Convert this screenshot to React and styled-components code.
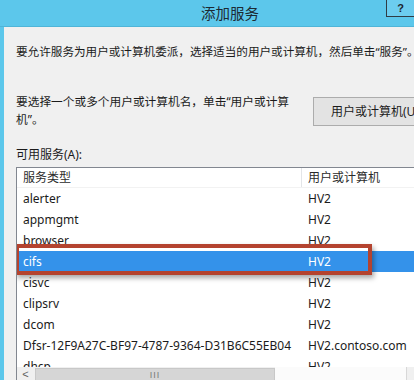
import React from 'react';
import styled, { createGlobalStyle } from 'styled-components';

const services = [
  { name: 'alerter', host: 'HV2' },
  { name: 'appmgmt', host: 'HV2' },
  { name: 'browser', host: 'HV2' },
  { name: 'cifs', host: 'HV2', selected: true },
  { name: 'cisvc', host: 'HV2' },
  { name: 'clipsrv', host: 'HV2' },
  { name: 'dcom', host: 'HV2' },
  { name: 'Dfsr-12F9A27C-BF97-4787-9364-D31B6C55EB04', host: 'HV2.contoso.com' },
  { name: 'dhcp', host: 'HV2' },
];

export default function App() {
  return (
    <>
      <GlobalStyle />
      <Window>
        <TitleBar>
          <Title>添加服务</Title>
          <HelpButton>?</HelpButton>
        </TitleBar>
        <Body>
          <Intro>要允许服务为用户或计算机委派，选择适当的用户或计算机，然后单击“服务”。</Intro>
          <PickRow>
            <PickText>要选择一个或多个用户或计算机名，单击“用户或计算机”。</PickText>
            <PickButton>用户或计算机(U)...</PickButton>
          </PickRow>
          <Label>可用服务(A):</Label>
          <ListBox>
            <HeaderRow>
              <HeadCell $first>服务类型</HeadCell>
              <HeadCell>用户或计算机</HeadCell>
            </HeaderRow>
            <Rows>
              {services.map((s) => (
                <Row key={s.name} $selected={s.selected}>
                  <Cell $first>{s.name}</Cell>
                  <Cell>{s.host}</Cell>
                  {s.selected && <Highlight />}
                </Row>
              ))}
            </Rows>
            <HScroll>
              <ArrowBtn>&lt;</ArrowBtn>
              <Thumb>III</Thumb>
              <Track />
            </HScroll>
          </ListBox>
        </Body>
      </Window>
    </>
  );
}

const GlobalStyle = createGlobalStyle`
  *, *::before, *::after {
    box-sizing: border-box;
  }
  html, body {
    margin: 0;
    padding: 0;
    overflow: hidden;
  }
  body {
    font-family: "Noto Sans", "Noto Sans CJK SC", sans-serif;
    font-size: 12px;
    color: #1b1b1b;
  }
`;

const Window = styled.div`
  width: 414px;
  height: 380px;
  overflow: hidden;
  background: #5cc7eb;
  display: flex;
  flex-direction: column;
`;

const TitleBar = styled.div`
  height: 27px;
  flex-shrink: 0;
  display: flex;
  align-items: flex-start;
  border-bottom: 1px solid #4fb5d8;
`;

const Title = styled.div`
  margin-left: 201px;
  line-height: 26px;
  font-size: 14.5px;
  color: #1c2a33;
`;

const HelpButton = styled.div`
  margin-left: auto;
  width: 28px;
  height: 17px;
  border: 1px solid #2f3c44;
  border-top: none;
  border-right: none;
  background: #6ccdef;
  color: #1c2430;
  font-family: "Liberation Sans", sans-serif;
  font-weight: bold;
  font-size: 11px;
  line-height: 16px;
  text-align: center;
`;

const Body = styled.div`
  flex: 1;
  margin-left: 4px;
  background: #f0f0f0;
  padding: 16px 0 0 12px;
  display: flex;
  flex-direction: column;
  overflow: hidden;
  min-height: 0;
`;

const Intro = styled.div`
  line-height: 18px;
  font-size: 11.6px;
  white-space: nowrap;
`;

const PickRow = styled.div`
  margin-top: 31px;
  display: flex;
  align-items: flex-start;
  gap: 15px;
`;

const PickText = styled.div`
  width: 282px;
  flex-shrink: 0;
  font-size: 11.7px;
  line-height: 18px;
`;

const PickButton = styled.div`
  flex-shrink: 0;
  margin-top: 5px;
  height: 29px;
  padding: 0 17px;
  border: 1px solid #acacac;
  background: #e3e3e3;
  line-height: 27px;
  white-space: nowrap;
`;

const Label = styled.div`
  margin-top: 18px;
  line-height: 18px;
`;

const ListBox = styled.div`
  margin-top: 3px;
  width: 420px;
  height: 218px;
  flex-shrink: 0;
  border: 1px solid #828790;
  background: #fff;
  display: flex;
  flex-direction: column;
`;

const HeaderRow = styled.div`
  height: 20px;
  flex-shrink: 0;
  display: flex;
  border-bottom: 1px solid #f2f2f2;
`;

const HeadCell = styled.div`
  width: ${(p) => (p.$first ? '285px' : 'auto')};
  padding-left: 6px;
  line-height: 19px;
  color: #2b2b2b;
  border-right: ${(p) => (p.$first ? '1px solid #e3e5e8' : 'none')};
`;

const Rows = styled.div`
  height: 179px;
  overflow: hidden;
  flex-shrink: 0;
`;

const Row = styled.div`
  position: relative;
  height: 21px;
  display: flex;
  align-items: center;
  background: ${(p) => (p.$selected ? '#3492ea' : 'transparent')};
  color: ${(p) => (p.$selected ? '#ffffff' : '#1b1b1b')};
`;

const Cell = styled.div`
  width: ${(p) => (p.$first ? '285px' : 'auto')};
  padding-left: 6px;
  white-space: nowrap;
  font-size: 12px;
`;

const Highlight = styled.div`
  position: absolute;
  left: -2px;
  top: -7px;
  width: 357px;
  height: 31px;
  border: 4px solid #b4432f;
  box-shadow: 2px 3px 5px rgba(0, 0, 0, 0.35);
  pointer-events: none;
`;

const HScroll = styled.div`
  height: 17px;
  flex-shrink: 0;
  display: flex;
  background: #f0f0f0;
`;

const ArrowBtn = styled.div`
  width: 17px;
  text-align: center;
  line-height: 14px;
  font-size: 11px;
  color: #606060;
  font-family: "Liberation Sans", sans-serif;
`;

const Thumb = styled.div`
  width: 240px;
  margin: 1px 0 0 1px;
  background: #d6d6d6;
  border: 1px solid #c8c8c8;
  text-align: center;
  font-size: 9px;
  line-height: 13px;
  color: #7a7a7a;
  letter-spacing: 1px;
  font-family: "Liberation Sans", sans-serif;
`;

const Track = styled.div`
  width: 132px;
  background: #fbfbfb;
  border-right: 1px solid #d8d8d8;
`;
